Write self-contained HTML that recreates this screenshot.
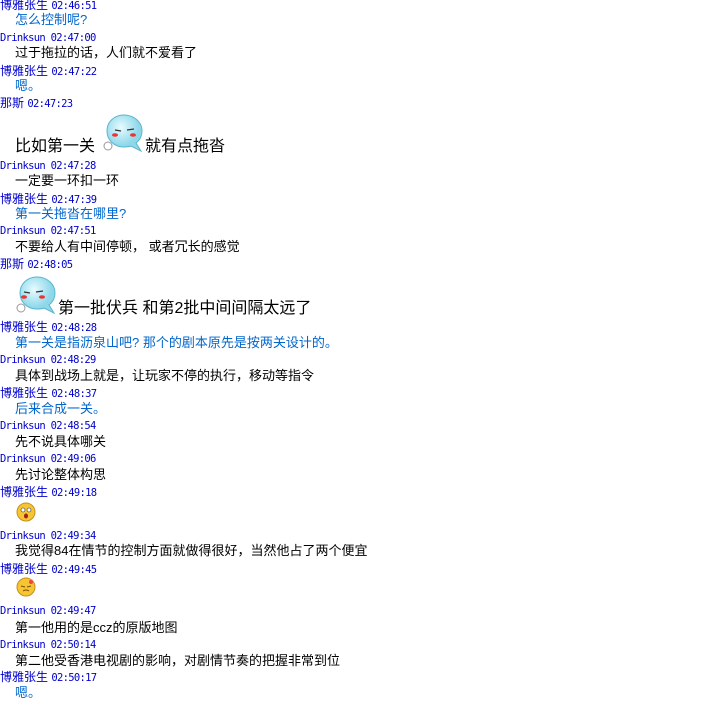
<!DOCTYPE html><html><head><meta charset="utf-8"><style>
body{margin:0;width:709px;height:711px;background:#fff;overflow:hidden;position:relative;font-family:"Liberation Sans","WenQuanYi Zen Hei","Noto Sans CJK SC",sans-serif;font-size:12px}
.l{position:absolute;white-space:nowrap;line-height:14px}
.h{left:0;color:#0000cc}
.t{font-family:"DejaVu Sans Mono",monospace;font-size:10.5px;letter-spacing:-0.7px}
.b{left:15px;color:#000;font-size:13px}
.c{left:15px;color:#0066cc;font-size:13px}
.big{font-size:16px;line-height:18px}
</style></head><body>
<div class="l h" style="top:-2px">博雅张生 <span class="t">02:46:51</span></div>
<div class="l c" style="top:13px">怎么控制呢?</div>
<div class="l h t" style="top:31px">Drinksun 02:47:00</div>
<div class="l b" style="top:46px">过于拖拉的话，人们就不爱看了</div>
<div class="l h" style="top:64px">博雅张生 <span class="t">02:47:22</span></div>
<div class="l c" style="top:79px">嗯。</div>
<div class="l h" style="top:96px">那斯 <span class="t">02:47:23</span></div>
<div class="l b big" style="top:138px">比如第一关</div>
<svg style="position:absolute;left:103px;top:113px" width="42" height="42" viewBox="0 0 42 42"><defs><radialGradient id="g" cx="40%" cy="35%"><stop offset="0" stop-color="#e8fbff"/><stop offset="1" stop-color="#8fd8ea"/></radialGradient></defs><path d="M21 2C31 2 39 9 39 18c0 5-2 9-6 12l5 8-10-5C26 34 24 34 21 34 11 34 4 27 4 18 4 9 11 2 21 2Z" fill="url(#g)" stroke="#5ab5cf"/><path d="M12 17l6 1M24 17l7-1" stroke="#333" stroke-width="1.2"/><ellipse cx="12" cy="22" rx="3" ry="1.8" fill="#e33"/><ellipse cx="30" cy="22" rx="3" ry="1.8" fill="#e33"/><circle cx="5" cy="33" r="4" fill="#fff" stroke="#999"/></svg>
<div class="l b big" style="top:138px;left:145px">就有点拖沓</div>
<div class="l h t" style="top:159px">Drinksun 02:47:28</div>
<div class="l b" style="top:174px">一定要一环扣一环</div>
<div class="l h" style="top:192px">博雅张生 <span class="t">02:47:39</span></div>
<div class="l c" style="top:207px">第一关拖沓在哪里?</div>
<div class="l h t" style="top:224px">Drinksun 02:47:51</div>
<div class="l b" style="top:240px">不要给人有中间停顿， 或者冗长的感觉</div>
<div class="l h" style="top:257px">那斯 <span class="t">02:48:05</span></div>
<svg style="position:absolute;left:16px;top:275px" width="42" height="42" viewBox="0 0 42 42"><path d="M21 2C31 2 39 9 39 18c0 5-2 9-6 12l5 8-10-5C26 34 24 34 21 34 11 34 4 27 4 18 4 9 11 2 21 2Z" fill="url(#g)" stroke="#5ab5cf"/><path d="M8 17l6 1M20 17l7-1" stroke="#333" stroke-width="1.2"/><ellipse cx="8" cy="22" rx="3" ry="1.8" fill="#e33"/><ellipse cx="26" cy="22" rx="3" ry="1.8" fill="#e33"/><circle cx="5" cy="33" r="4" fill="#fff" stroke="#999"/></svg>
<div class="l b big" style="top:300px;left:58px">第一批伏兵 和第2批中间间隔太远了</div>
<div class="l h" style="top:320px">博雅张生 <span class="t">02:48:28</span></div>
<div class="l c" style="top:336px">第一关是指沥泉山吧? 那个的剧本原先是按两关设计的。</div>
<div class="l h t" style="top:353px">Drinksun 02:48:29</div>
<div class="l b" style="top:369px">具体到战场上就是，让玩家不停的执行，移动等指令</div>
<div class="l h" style="top:386px">博雅张生 <span class="t">02:48:37</span></div>
<div class="l c" style="top:402px">后来合成一关。</div>
<div class="l h t" style="top:419px">Drinksun 02:48:54</div>
<div class="l b" style="top:435px">先不说具体哪关</div>
<div class="l h t" style="top:452px">Drinksun 02:49:06</div>
<div class="l b" style="top:468px">先讨论整体构思</div>
<div class="l h" style="top:485px">博雅张生 <span class="t">02:49:18</span></div>
<svg style="position:absolute;left:16px;top:502px" width="20" height="20"><circle cx="10" cy="10" r="9" fill="#f6c531" stroke="#c8901a"/><circle cx="7" cy="8" r="2" fill="#fff" stroke="#333" stroke-width=".6"/><circle cx="13" cy="8" r="2" fill="#fff" stroke="#333" stroke-width=".6"/><ellipse cx="10" cy="14" rx="2" ry="2.5" fill="#922"/></svg>
<div class="l h t" style="top:529px">Drinksun 02:49:34</div>
<div class="l b" style="top:544px">我觉得84在情节的控制方面就做得很好，当然他占了两个便宜</div>
<div class="l h" style="top:562px">博雅张生 <span class="t">02:49:45</span></div>
<svg style="position:absolute;left:16px;top:577px" width="20" height="20"><circle cx="10" cy="10" r="9" fill="#f6c531" stroke="#c8901a"/><path d="M5 9l4 1M11 10l4-1M7 14q3-2 6 0" stroke="#7a4a10" fill="none"/><circle cx="15" cy="5" r="2" fill="#e44"/></svg>
<div class="l h t" style="top:604px">Drinksun 02:49:47</div>
<div class="l b" style="top:621px">第一他用的是ccz的原版地图</div>
<div class="l h t" style="top:638px">Drinksun 02:50:14</div>
<div class="l b" style="top:654px">第二他受香港电视剧的影响，对剧情节奏的把握非常到位</div>
<div class="l h" style="top:670px">博雅张生 <span class="t">02:50:17</span></div>
<div class="l c" style="top:686px">嗯。</div>
</body></html>
